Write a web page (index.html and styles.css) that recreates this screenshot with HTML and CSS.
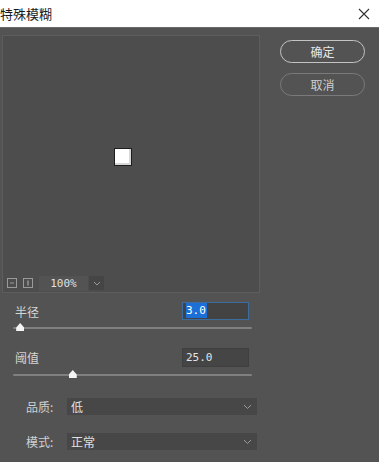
FILE: index.html
```html
<!DOCTYPE html>
<html lang="zh-CN">
<head>
  <meta charset="UTF-8" />
  <meta name="viewport" content="width=device-width, initial-scale=1.0" />
  <title>特殊模糊</title>
  <link rel="stylesheet" href="styles.css">
</head>
<body>
  <header class="titlebar">
    <span class="title">特殊模糊</span>
    <svg class="close" width="12" height="12" viewBox="0 0 12 12">
      <path d="M1 1 L11 11 M11 1 L1 11" stroke="#333" stroke-width="1.1" fill="none" />
    </svg>
  </header>

  <main class="dialog">
    <section class="left">
      <div class="preview">
        <div class="canvas">
          <div class="square"></div>
        </div>
        <div class="zoombar">
          <span class="zoom-btn">
            <svg width="10" height="10" viewBox="0 0 10 10"><rect x="0.5" y="0.5" width="9" height="9" fill="none" stroke="#9a9a9a" /><path d="M3 5 H7" stroke="#9a9a9a" /></svg>
          </span>
          <span class="zoom-btn">
            <svg width="10" height="10" viewBox="0 0 10 10"><rect x="0.5" y="0.5" width="9" height="9" fill="none" stroke="#9a9a9a" /><path d="M5 2.5 V7.5" stroke="#bbb" /></svg>
          </span>
          <span class="zoom-value">100%</span>
          <span class="zoom-drop">
            <svg width="8" height="5" viewBox="0 0 8 5"><path d="M1 1 L4 4 L7 1" stroke="#999" fill="none" /></svg>
          </span>
        </div>
      </div>

      <div class="param">
        <div class="param-row">
          <label>半径</label>
          <div class="num-input focused"><span class="sel">3.0</span></div>
        </div>
        <div class="slider">
          <div class="track"></div>
          <div class="thumb" style="left: 3%"></div>
        </div>
      </div>

      <div class="param second">
        <div class="param-row">
          <label>阈值</label>
          <div class="num-input tall">25.0</div>
        </div>
        <div class="slider">
          <div class="track"></div>
          <div class="thumb" style="left: 25%"></div>
        </div>
      </div>

      <div class="field">
        <label>品质:</label>
        <div class="select"><span>低</span>
          <svg width="9" height="6" viewBox="0 0 9 6"><path d="M1 1 L4.5 4.5 L8 1" stroke="#9a9a9a" fill="none" /></svg>
        </div>
      </div>
      <div class="field">
        <label>模式:</label>
        <div class="select"><span>正常</span>
          <svg width="9" height="6" viewBox="0 0 9 6"><path d="M1 1 L4.5 4.5 L8 1" stroke="#9a9a9a" fill="none" /></svg>
        </div>
      </div>
    </section>

    <aside class="actions">
      <button class="btn primary">确定</button>
      <button class="btn">取消</button>
    </aside>
  </main>
</body>
</html>
```

FILE: styles.css
```css
body {
  margin: 0;
  width: 379px;
  height: 462px;
  overflow: hidden;
  background-color: #535353;
  font-family: "Noto Sans CJK SC", "Liberation Sans", sans-serif;
  font-size: 12px;
  color: #d6d6d6;
}
.titlebar {
  height: 27px;
  background-color: #fff;
  border-bottom: 1px solid #6a6a6a;
  display: flex;
  align-items: center;
  justify-content: space-between;
  padding: 0 9px 0 0;
}
.title {
  font-size: 13px;
  color: #1a1a1a;
}
.close {
  display: block;
}
.dialog {
  display: flex;
  gap: 20px;
}
.left {
  width: 258px;
  padding-left: 2px;
}
.preview {
  margin-top: 7px;
  height: 256px;
  border: 1px solid #5d5d5d;
  background-color: #4d4d4d;
  display: flex;
  flex-direction: column;
}
.canvas {
  flex: 1;
  display: flex;
  align-items: center;
  justify-content: center;
  padding-right: 16px;
  padding-top: 2px;
}
.square {
  width: 16px;
  height: 16px;
  background-color: #fff;
  border: 1px solid #1e1e1e;
  box-shadow: inset -2px -2px 0 #d8d8d8;
}
.zoombar {
  height: 16px;
  display: flex;
  align-items: center;
  padding-left: 4px;
  margin-bottom: 1px;
}
.zoom-btn {
  display: flex;
  width: 10px;
  height: 10px;
  margin-right: 6px;
}
.zoom-value {
  width: 49px;
  height: 15px;
  line-height: 15px;
  text-align: center;
  background-color: #535353;
  font-family: "DejaVu Sans Mono", monospace;
  font-size: 11px;
  color: #e0e0e0;
}
.zoom-drop {
  width: 15px;
  height: 14px;
  margin-left: 1px;
  background-color: #454545;
  display: flex;
  align-items: center;
  justify-content: center;
}
.param {
  margin-top: 9px;
}
.param.second {
  margin-top: 15px;
}
.param-row {
  display: flex;
  align-items: center;
  justify-content: space-between;
  padding: 0 11px 0 13px;
}
.num-input {
  width: 65px;
  height: 16px;
  line-height: 16px;
  border: 1px solid #3f3f3f;
  background-color: #454545;
  font-family: "DejaVu Sans Mono", monospace;
  font-size: 11px;
  color: #e4e4e4;
  text-indent: 3px;
}
.num-input.tall {
  height: 17px;
  line-height: 17px;
}
.num-input.focused {
  border-color: #3c6d9e;
  background-color: #434343;
}
.sel {
  background-color: #1c6fd6;
  color: #fff;
  padding: 1px 1px 1px 0;
}
.slider {
  position: relative;
  margin: 2px 8px 0 11px;
  height: 11px;
}
.track {
  position: absolute;
  left: 0;
  right: 0;
  top: 5px;
  height: 2px;
  background-color: #808080;
  border-radius: 1px;
}
.thumb {
  position: absolute;
  top: 1px;
  width: 8px;
  height: 8px;
  margin-left: -4px;
  background-color: #f4f4f4;
  clip-path: polygon(50% 0, 100% 55%, 100% 100%, 0 100%, 0 55%);
}
.field {
  display: flex;
  align-items: center;
  height: 17px;
  margin-top: 18px;
  padding-left: 24px;
}
.field label {
  width: 41px;
  color: #d0d0d0;
}
.select {
  width: 181px;
  height: 17px;
  background-color: #474747;
  display: flex;
  align-items: center;
  justify-content: space-between;
  padding: 0 5px 0 4px;
  color: #e0e0e0;
}
.actions {
  display: flex;
  flex-direction: column;
  gap: 10px;
  padding-top: 12px;
}
.btn {
  width: 85px;
  height: 23px;
  border-radius: 12px;
  border: 1px solid #7a7a7a;
  background-color: transparent;
  color: #cfcfcf;
  font-family: "Noto Sans CJK SC", sans-serif;
  font-size: 12px;
  padding: 0;
}
.btn.primary {
  border-color: #c4c4c4;
  color: #e8e8e8;
}
```
